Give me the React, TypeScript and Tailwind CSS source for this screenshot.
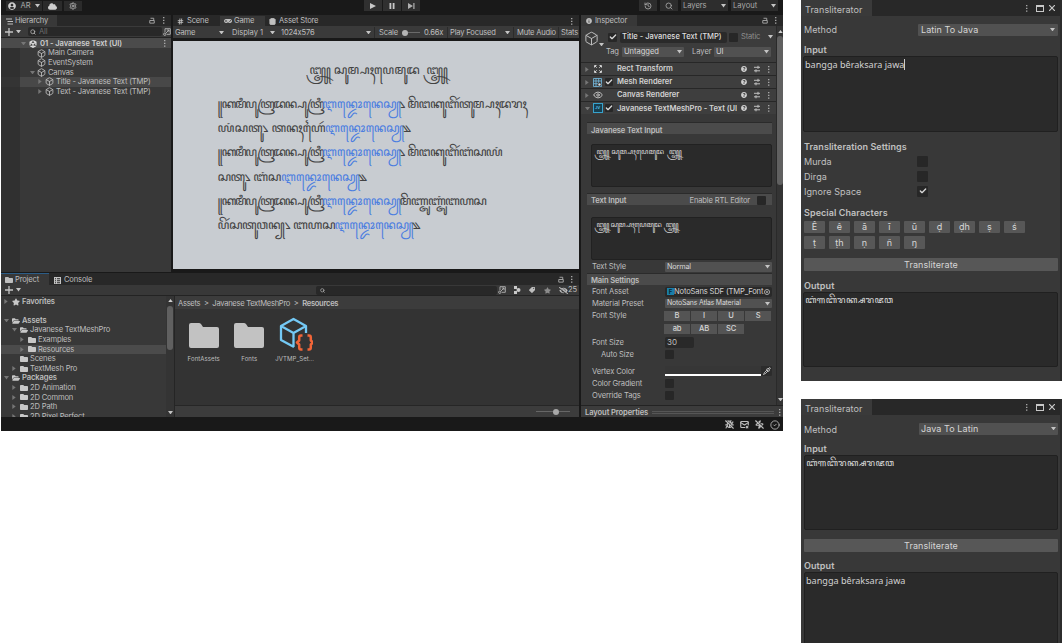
import React from "react";
import { Box, Search, History, Settings, Check, Eye, Pipette, CircleCheck, Hash, ShoppingBag, BugOff, MailX, ZapOff } from "lucide-react";
import { SiUnity } from "react-icons/si";
import { FaFolder, FaFolderOpen, FaStar, FaUserCircle, FaQuestionCircle, FaInfoCircle, FaTag, FaCloud, FaEyeSlash, FaGamepad } from "react-icons/fa";

const jv = "font-['Noto_Sans_Javanese','Noto_Sans',sans-serif]";

const Down = ({ c = "fill-[#c4c4c4]" }: { c?: string }) => (
  <svg viewBox="0 0 6 4" className={`h-[3.5px] w-[5px] shrink-0 ${c}`}><path d="M0 0h6L3 4z" /></svg>
);
const Right = () => (
  <svg viewBox="0 0 4 6" className="h-[5px] w-[4px] shrink-0 fill-[#767676]"><path d="M0 0v6l4-3z" /></svg>
);
const Dots = () => (
  <svg viewBox="0 0 2 8" className="h-[7px] w-[2px] shrink-0 fill-[#b8b8b8]"><path d="M0 0h1.4v1.4H0zM0 3.2h1.4v1.4H0zM0 6.4h1.4v1.4H0z" /></svg>
);
const LockIcon = () => (
  <svg viewBox="0 0 8 9" className="h-[7px] w-[6px] shrink-0" fill="none" stroke="#aaa" strokeWidth="1.2"><path d="M1 4.5h6v3.500H1zM2 1.500h4.300v3" /></svg>
);
const Plus = () => (
  <svg viewBox="0 0 8 8" className="h-[8px] w-[8px] shrink-0" stroke="#c4c4c4" strokeWidth="1.3"><path d="M4 0v8M0 4h8" /></svg>
);
const PickerIcon = () => (
  <svg viewBox="0 0 8 8" className="h-[8px] w-[8px] shrink-0" fill="none" stroke="#b4b4b4" strokeWidth=".9"><path d="M2 4V.7h5.300v5.600H4M2.800 5.200 6 2M3.800 2H6v2.200" /><circle cx="1.800" cy="6.200" r="1.200" /></svg>
);
const Presets = () => (
  <svg viewBox="0 0 8 8" className="h-[8px] w-[8px] shrink-0" stroke="#c0c0c0" strokeWidth="1"><path d="M1 2.300h6M1 5.800h6M5 .8v3M3 4.300v3" /></svg>
);
const Caret = ({ open }: { open?: boolean }) => (open ? <Down c="fill-[#767676]" /> : <Right />);

const Tick = ({ on, cls = "size-[9px]" }: { on?: boolean; cls?: string }) => (
  <span className={`flex shrink-0 items-center justify-center rounded-[1px] bg-[#272727] ${cls}`}>
    {on && <Check className="size-[8px] text-[#d8d8d8]" strokeWidth={4} />}
  </span>
);

const Drop = ({ label, cls }: { label: string; cls: string }) => (
  <div className={`flex items-center justify-between rounded-[1px] bg-[#515151] text-[#d6d6d6] ${cls}`}>
    <span>{label}</span>
    <Down />
  </div>
);

function TopBar() {
  return (
    <div className="flex h-[15px] items-start bg-[#191919] text-[#a8a8a8]">
      <div className="ml-[5px] mt-px flex h-[10px] w-[36px] items-center justify-between bg-[#2b2b2b] px-[2px]">
        <FaUserCircle className="size-[8px] text-[#d0d0d0]" />
        <span>AR</span>
        <Down />
      </div>
      <div className="ml-[1px] mt-px flex h-[10px] w-[19px] items-center justify-center bg-[#2b2b2b]"><FaCloud className="size-[9px] text-[#cfcfcf]" /></div>
      <div className="ml-[2px] mt-px flex h-[10px] w-[18px] items-center justify-center bg-[#2b2b2b]"><Settings className="size-[8px]" strokeWidth={3} /></div>
      <div className="ml-[282px] flex h-[11px] gap-px">
        <div className="flex w-[18px] items-center justify-center bg-[#303030]"><svg viewBox="0 0 6 6" className="size-[6px] fill-[#c8c8c8]"><path d="M0 0v6l6-3z" /></svg></div>
        <div className="flex w-[18px] items-center justify-center bg-[#303030]"><svg viewBox="0 0 6 6" className="size-[6px] fill-[#c8c8c8]"><path d="M.5 0h1.800v6H.5zM3.700 0h1.800v6H3.700z" /></svg></div>
        <div className="flex w-[18px] items-center justify-center bg-[#303030]"><svg viewBox="0 0 7 6" className="h-[6px] w-[7px] fill-[#b0b0b0]"><path d="M0 0v6l5-3zM5.300 0h1.200v6H5.300z" /></svg></div>
      </div>
      <div className="ml-[219px] flex h-[11px] w-[18px] items-center justify-center bg-[#2d2d2d]"><History className="size-[8px]" strokeWidth={2.5} /></div>
      <div className="ml-[3px] flex h-[11px] w-[18px] items-center justify-center bg-[#2d2d2d]"><Search className="size-[8px]" strokeWidth={2.5} /></div>
      <div className="ml-[3px] flex h-[11px] w-[47px] items-center justify-between bg-[#2d2d2d] px-[2px] pt-px tracking-[-.05px]"><span>Layers</span><Down /></div>
      <div className="ml-[3px] flex h-[11px] w-[47px] items-center justify-between bg-[#2d2d2d] px-[2px] pt-px tracking-[.05px]"><span>Layout</span><Down /></div>
    </div>
  );
}

function HNode({ label, pad, caret, sel }: { label: string; pad: string; caret?: "open" | "closed"; sel?: boolean }) {
  return (
    <div className="flex h-[9.6px]">
      <div className={`w-[19px] ${sel ? "bg-[#343434]" : "bg-[#303030]"}`} />
      <div className={`flex flex-1 items-center ${pad} ${sel ? "bg-[#484848]" : ""}`}>
        <span className="flex w-[7px] items-center">{caret && <Caret open={caret === "open"} />}</span>
        <Box className="size-[9px] text-[#c4c4c4]" strokeWidth={2.2} />
        <span className="ml-[2px]">{label}</span>
      </div>
    </div>
  );
}

function Hierarchy() {
  return (
    <div className="flex h-[257px] w-[170px] flex-col bg-[#383838]">
      <div className="flex h-[11px] items-center bg-[#282828]">
        <div className="flex h-full w-[56px] items-center gap-[2px] bg-[#383838] pl-[5px] pt-px">
          <svg viewBox="0 0 7 7" className="size-[7px]" stroke="#c0c0c0" strokeWidth="1"><path d="M0 1h6M1.500 3.500H7M1.500 6H7" /></svg>
          <span>Hierarchy</span>
        </div>
        <div className="ml-auto flex items-center gap-[8px] pr-[6px]"><LockIcon /><Dots /></div>
      </div>
      <div className="flex h-[12px] items-center border-b border-[#232323] bg-[#3a3a3a]">
        <div className="flex items-center gap-[3px] pl-[4px]"><Plus /><Down /></div>
        <div className="ml-[7px] flex h-[9px] w-[134px] items-center gap-[3px] rounded-[2px] bg-[#282828] pl-[2px] text-[#6c6c6c]">
          <Search className="size-[6px] text-[#bbb]" strokeWidth={3} /><span>All</span>
        </div>
        <div className="ml-[1px]"><PickerIcon /></div>
      </div>
      <div className="flex h-[10.400px] items-center bg-[#4b4b4b] pl-[20px] pr-[5px] pt-px font-semibold tracking-[-.08px]">
        <Down c="fill-[#767676]" />
        <SiUnity className="ml-[3px] size-[8px] text-[#e0e0e0]" />
        <span className="ml-[3px] flex-1 text-[#cecece]">01 - Javanese Text (UI)</span>
        <Dots />
      </div>
      <HNode label="Main Camera" pad="pl-[10px]" />
      <HNode label="EventSystem" pad="pl-[10px]" />
      <HNode label="Canvas" pad="pl-[10px]" caret="open" />
      <HNode label="Title - Javanese Text (TMP)" pad="pl-[18px]" caret="closed" sel />
      <HNode label="Text - Javanese Text (TMP)" pad="pl-[18px]" caret="closed" />
      <div className="w-[19px] flex-1 bg-[#303030]" />
    </div>
  );
}

const title = "꧃ ꦱꦸꦩ꧀ꦥꦃꦥꦺꦩꦸꦢ ꧃";
const indo = "ꦆꦤ꧀ꦢꦺꦴꦤꦺꦱꦾ";
const opening = "꧋ꦏꦩꦶꦥꦸꦠꦿꦢꦤ꧀ꦥꦸꦠꦿꦶ";
const verse: { a: string; wa: string; b: string; wb: string }[] = [
  { a: opening, wa: "w-[104.5px] tracking-[-1.5px]", b: "꧈ ꦩꦼꦔꦏꦸꦧꦼꦂꦠꦸꦩ꧀ꦥꦃꦢꦫꦃ", wb: "tracking-[-.6px]" },
  { a: "ꦪꦁꦱꦠꦸ꧈ ꦠꦤꦃꦲꦻꦂ", wa: "w-[107.5px]", b: "꧉", wb: "" },
  { a: opening, wa: "w-[104.5px] tracking-[-1.5px]", b: "꧈ ꦩꦼꦔꦏꦸꦧꦼꦂꦧꦁꦱꦪꦁ", wb: "tracking-[-.6px]" },
  { a: "ꦱꦠꦸ꧈ ꦧꦁꦱ", wa: "w-[63.5px] tracking-[-.3px]", b: "꧉", wb: "" },
  { a: opening, wa: "w-[104.5px] tracking-[-1.5px]", b: "ꦩꦼꦚ꧀ꦗꦸꦚ꧀ꦗꦸꦁꦧꦲꦱ", wb: "tracking-[-.6px]" },
  { a: "ꦥꦼꦂꦱꦠꦸꦮꦤ꧀꧈ ꦧꦲꦱ", wa: "w-[117px] tracking-[-.3px]", b: "꧉", wb: "" },
];

function GameView() {
  return (
    <div className="flex h-[257px] w-[406px] flex-col bg-[#191919]">
      <div className="flex h-[11px] items-center bg-[#282828] pt-px">
        <div className="flex w-[47px] items-center gap-[3px] pl-[4px]"><Hash className="size-[7px]" strokeWidth={3} />Scene</div>
        <div className="flex h-full w-[45px] items-center gap-[2px] bg-[#383838] pl-[4px]"><FaGamepad className="size-[8px]" />Game</div>
        <div className="flex items-center gap-[3px] pl-[4px]"><ShoppingBag className="size-[7px] fill-[#c0c0c0]" strokeWidth={3} />Asset Store</div>
        <div className="ml-auto pr-[6px]"><Dots /></div>
      </div>
      <div className="flex h-[12px] items-center bg-[#3a3a3a] pt-px">
        <div className="flex w-[51px] items-center justify-between pl-[2px]">Game<Down /></div>
        <div className="ml-[7px] flex w-[44px] items-center justify-between pl-[1px] tracking-[-.05px]"><span>Display 1</span><Down /></div>
        <div className="ml-[6px] flex h-full w-[94px] items-center justify-between border-r border-[#2b2b2b] pr-[3px]"><span>1024x576</span><Down /></div>
        <div className="flex h-full w-[73px] items-center border-r border-[#2b2b2b] pl-[4px]">
          Scale
          <span className="ml-[4px] size-[6px] rounded-full bg-[#b5b5b5]" /><span className="h-px w-[12px] bg-[#6a6a6a]" />
          <span className="ml-[4px]">0.66x</span>
        </div>
        <div className="flex h-full w-[66px] items-center justify-between border-r border-[#2b2b2b] pl-[2px] pr-[3px]"><span>Play Focused</span><Down /></div>
        <div className="flex h-full w-[45px] items-center border-r border-[#2b2b2b] pl-[3px] tracking-[-.22px]">Mute Audio</div>
        <div className="pl-[2px]">Stats</div>
      </div>
      <div className={`mt-[3px] mb-[3px] flex flex-1 flex-col bg-[#c8ccd1] tracking-normal text-[#424242] ${jv}`}>
        <div className="mt-[16px] flex h-[32px] items-center justify-center pl-[1px] text-[12.400px] whitespace-pre">{title}</div>
        <div className="ml-[44.5px] mt-[6px] text-[12.300px]">
          {verse.map((l, i) => (
            <div key={i} className="flex h-[24.2px] items-center whitespace-pre">
              <span className={`shrink-0 ${l.wa}`}>{l.a}</span><span className="w-[77.5px] shrink-0 text-[#4c7ee0]">{indo}</span><span className={l.wb}>{l.b}</span>
            </div>
          ))}
        </div>
      </div>
    </div>
  );
}

function TNode({ label, pad, caret, sel, open, bold, star }: { label: string; pad: string; caret?: "open" | "closed"; sel?: boolean; open?: boolean; bold?: boolean; star?: boolean }) {
  const Icon = star ? FaStar : open ? FaFolderOpen : FaFolder;
  return (
    <div className={`flex h-[9.6px] shrink-0 items-center ${pad} ${sel ? "bg-[#4b4b4b]" : ""} ${bold ? "font-semibold tracking-[-.1px]" : ""}`}>
      <span className="flex w-[8px] items-center">{caret && <Caret open={caret === "open"} />}</span>
      <Icon className="size-[8px] shrink-0 text-[#c8c8c8]" />
      <span className="ml-[2px]">{label}</span>
    </div>
  );
}

function Asset({ name, children }: { name: string; children: React.ReactNode }) {
  return (
    <div className="flex w-[45.500px] flex-col items-center">
      <div className="flex h-[40px] items-center">{children}</div>
      <span className="mt-px text-[6px] tracking-[.08px]">{name}</span>
    </div>
  );
}
const BigFolder = () => (
  <svg viewBox="0 0 30 25" className="h-[25px] w-[30px] fill-[#c2c2c2]"><path d="M0 2Q0 0 2 0h8q1 0 2 1l2 3h14q2 0 2 2v17q0 2-2 2H2q-2 0-2-2z" /></svg>
);

function Project() {
  return (
    <div className="flex h-[144px] w-[578px] flex-col bg-[#383838]">
      <div className="flex h-[12px] items-center bg-[#282828]">
        <div className="flex h-full w-[48px] items-center gap-[2px] border-t border-[#2c5d87] bg-[#383838] pl-[4px] pt-px"><FaFolder className="size-[8px]" />Project</div>
        <div className="flex items-center gap-[3px] pl-[5px] pt-[2px]">
          <svg viewBox="0 0 7 7" className="size-[7px] fill-[#c4c4c4]"><path d="M0 0h7v7H0zM1 1.200v1h1v-1zM3 1.200v1h3v-1zM1 3.200v1h1v-1zM3 3.200v1h3v-1zM1 5.200v1h1v-1zM3 5.200v1h3v-1z" fillRule="evenodd" /></svg>Console
        </div>
        <div className="ml-auto flex items-center gap-[7px] pr-[6px]"><LockIcon /><Dots /></div>
      </div>
      <div className="flex h-[11px] items-center border-b border-[#232323]">
        <div className="flex items-center gap-[3px] pl-[4px]"><Plus /><Down /></div>
        <div className="ml-[295px] flex h-[9px] w-[181px] items-center rounded-[2px] bg-[#282828] pl-[4px]"><Search className="size-[5px]" strokeWidth={3} /></div>
        <div className="ml-[1px] flex h-full items-center">
          <PickerIcon />
          <svg viewBox="0 0 8 8" className="ml-[7px] size-[8px] fill-[#c8c8c8]"><path d="M1 0h3v3H1zM1 5h3v3H1z" /><circle cx="5.500" cy="4" r="2" /></svg>
          <FaTag className="ml-[8px] size-[6px] -scale-x-100" />
          <FaStar className="ml-[9px] size-[7px] text-[#8c8c8c]" />
          <FaEyeSlash className="ml-[8px] size-[9px]" /><span>25</span>
        </div>
      </div>
      <div className="flex min-h-0 flex-1">
        <div className="flex w-[165px] flex-col overflow-hidden pt-[.8px]">
          <TNode label="Favorites" pad="pl-[3px]" caret="closed" bold star />
          <div className="h-[9.400px] shrink-0" />
          <TNode label="Assets" pad="pl-[3px]" caret="open" bold open />
          <TNode label="Javanese TextMeshPro" pad="pl-[11px]" caret="open" open />
          <TNode label="Examples" pad="pl-[19px]" caret="closed" />
          <TNode label="Resources" pad="pl-[19px]" caret="closed" sel />
          <TNode label="Scenes" pad="pl-[11px]" />
          <TNode label="TextMesh Pro" pad="pl-[11px]" caret="closed" />
          <TNode label="Packages" pad="pl-[3px]" caret="open" bold open />
          <TNode label="2D Animation" pad="pl-[11px]" caret="closed" />
          <TNode label="2D Common" pad="pl-[11px]" caret="closed" />
          <TNode label="2D Path" pad="pl-[11px]" caret="closed" />
          <TNode label="2D Pixel Perfect" pad="pl-[11px]" caret="closed" />
        </div>
        <div className="flex w-[9px] flex-col items-center border-r border-[#252525] bg-[#343434] py-[3px]">
          <svg viewBox="0 0 6 4" className="h-[3px] w-[5px] shrink-0 fill-[#d0d0d0]"><path d="M0 4h6L3 0z" /></svg>
          <div className="mt-[4px] h-[44px] w-[6px] rounded-[3px] bg-[#606060]" />
          <div className="mt-auto flex"><Down /></div>
        </div>
        <div className="flex flex-1 flex-col bg-[#333]">
          <div className="flex h-[13px] items-center bg-[#3c3c3c] pl-[3px] pt-[2px] tracking-[-.3px] whitespace-pre">Assets  &gt;  Javanese TextMeshPro  &gt;  <b className="font-semibold">Resources</b></div>
          <div className="flex pl-[6px] pt-[6px]">
            <Asset name="FontAssets"><BigFolder /></Asset>
            <Asset name="Fonts"><BigFolder /></Asset>
            <Asset name="JVTMP_Set...">
              <svg viewBox="0 0 36 36" className="h-[36px] w-[36px]" fill="none" strokeLinejoin="round">
                <path d="M17 30 4 23V9l12.500-7L29 9v7M4 9l12.500 7L29 9M16.500 16v14" stroke="#74c9f5" strokeWidth="2.300" />
                <path d="M25.500 18.500H24q-1.800 0-1.800 2v3L20 25.500l2.200 2v3q0 2 1.800 2h1.500M30.500 18.500H32q1.800 0 1.800 2v3l2.200 2-2.200 2v3q0 2-1.800 2h-1.500" stroke="#f26538" strokeWidth="2.500" />
              </svg>
            </Asset>
          </div>
          <div className="mt-auto flex h-[12px] items-center border-t border-[#262626] bg-[#3c3c3c] pl-[361px]">
            <span className="h-px w-[17px] bg-[#666]" /><span className="size-[6px] rounded-full bg-[#a8a8a8]" /><span className="h-px w-[11px] bg-[#666]" />
          </div>
        </div>
      </div>
    </div>
  );
}

function Comp({ icon, label, on, open }: { icon: React.ReactNode; label: string; on?: boolean; open?: boolean }) {
  return (
    <div className="flex h-[13.100px] items-center border-t border-[#272727] bg-[#3e3e3e] pl-[4px] pr-[6px] font-semibold tracking-[-.04px] text-[#d2d2d2]">
      <span className="flex w-[7px]"><Caret open={open} /></span>
      <span className="flex w-[11px] justify-center">{icon}</span>
      <span className="flex w-[14px] pl-[2px]">{on && <Tick on cls="size-[8px]" />}</span>
      <span className="w-[120px] overflow-hidden py-px whitespace-nowrap">{label}</span>
      <span className="ml-auto flex items-center"><FaQuestionCircle className="size-[6px]" /><span className="ml-[6px]"><Presets /></span><span className="ml-[7px]"><Dots /></span></span>
    </div>
  );
}

function Field({ label, h, children, indent }: { label: string; h: string; children?: React.ReactNode; indent?: boolean }) {
  return (
    <div className={`flex items-center ${h}`}>
      <span className={`w-[73px] shrink-0 tracking-[-.15px] ${indent ? "pl-[9px]" : ""}`}>{label}</span>
      {children}
    </div>
  );
}

const styleBtn = "flex h-[10px] w-[26px] items-center justify-center bg-[#545454] font-medium text-[#d4d4d4]";
const jvBox = "ml-[4px] h-[43px] rounded-[2px] border border-[#212121] bg-[#2a2a2a] pl-[2px] pt-[5px] text-[7.500px] whitespace-pre text-[#d0d0d0]";

function Inspector() {
  return (
    <div className="flex h-[402px] w-[202px] flex-col bg-[#383838]">
      <div className="flex h-[11px] items-center bg-[#282828]">
        <div className="flex h-full w-[56px] items-center gap-[3px] bg-[#383838] pl-[5px] pt-px"><FaInfoCircle className="size-[6px]" /><span>Inspector</span></div>
        <div className="ml-auto flex items-center gap-[7px] pr-[6px]"><LockIcon /><Dots /></div>
      </div>
      <div className="flex h-[379px]">
        <div className="flex w-[195px] flex-col">
          <div className="flex h-[36px] bg-[#3c3c3c]">
            <div className="mt-[4px] flex h-[16px] w-[23px] items-end pl-[3px]"><Box className="size-[15px] shrink-0" strokeWidth={1.600} /><Down /></div>
            <div className="flex-1">
              <div className="mt-[5px] flex h-[12px] items-center">
                <Tick on cls="ml-[4px] size-[9px]" />
                <span className="ml-[3px] flex h-[11px] w-[107px] items-center rounded-[2px] bg-[#2a2a2a] pl-[2px] font-medium tracking-[-.02px] text-[#dedede]">Title - Javanese Text (TMP)</span>
                <Tick cls="ml-[2px] size-[9px]" />
                <span className="ml-[3px] text-[#8c8c8c]">Static</span><span className="ml-[8px]"><Down /></span>
              </div>
              <div className="mt-[4px] flex h-[10px] items-center">
                <span className="ml-[2px] w-[16px]">Tag</span>
                <Drop label="Untagged" cls="h-[10px] w-[62px] px-[2px] tracking-[-.05px]" />
                <span className="ml-[8px] w-[22px] tracking-[-.05px]">Layer</span>
                <Drop label="UI" cls="h-[10px] w-[57px] px-[2px]" />
              </div>
            </div>
          </div>
          <Comp label="Rect Transform" icon={<svg viewBox="0 0 8 8" className="size-[8px]" fill="none" stroke="#d0d0d0" strokeWidth="1"><path d="M.5 2.500V.5h2M5.500.5h2v2M.5 5.500v2h2M7.500 5.500v2h-2" /><path d="M1 1l1.700 1.700M7 1 5.300 2.700M1 7l1.700-1.700M7 7 5.300 5.300" /></svg>} />
          <Comp on label="Mesh Renderer" icon={<svg viewBox="0 0 9 9" className="size-[9px]" fill="none" stroke="#76bfe6" strokeWidth=".8"><path d="M.5.5h8v8h-8zM3 .5v8M5.700.5v8M.5 3h8M.5 5.700h8" /><circle cx="6.500" cy="6.500" r="1.600" fill="#ddd" stroke="#333" /></svg>} />
          <Comp label="Canvas Renderer" icon={<Eye className="size-[10px]" strokeWidth={2} />} />
          <Comp on open label="Javanese TextMeshPro - Text (UI" icon={<span className="flex size-[10px] items-center justify-center border border-[#37a2cc] bg-[#173f50] text-[4px] text-[#5cc4ea]">JV</span>} />
          <div className="flex flex-1 flex-col pl-[6px] pr-[4px]">
            <div className="mt-[8px] flex h-[12px] items-center border-t border-[#2b2b2b] bg-[#4b4b4b] pl-[4px] pt-[3px] font-semibold tracking-[-.12px]">Javanese Text Input</div>
            <div className={`mt-[10px] tracking-[.2px] ${jvBox} ${jv}`}>{title}</div>
            <div className="mt-[6px] flex h-[12px] items-center border-t border-[#2b2b2b] bg-[#4b4b4b] pl-[4px] pt-[2px]">
              <span className="font-semibold tracking-[-.12px]">Text Input</span><span className="ml-auto mr-[7px]">Enable RTL Editor</span><Tick cls="mr-[6px] size-[9px]" />
            </div>
            <div className={`mt-[12px] tracking-[-.2px] ${jvBox} ${jv}`}>{title}</div>
            <div className="pl-[5px]"><Field label="Text Style" h="h-[13px]"><Drop label="Normal" cls="h-[10px] flex-1 px-[2px] text-[7.300px]" /></Field></div>
            <div className="flex h-[12px] items-center border-t border-[#2b2b2b] bg-[#4b4b4b] pl-[4px] pt-px font-semibold tracking-[-.15px]">Main Settings</div>
            <div className="pl-[5px]">
              <Field label="Font Asset" h="h-[13px]">
                <div className="flex h-[10px] flex-1 items-center overflow-hidden rounded-[2px] bg-[#292929] pl-[2px] whitespace-nowrap text-[#d4d4d4]"><span className="flex size-[7px] shrink-0 items-center justify-center bg-[#1a7ea8] text-[6px] font-bold text-[#0b2733]">F</span><span className="w-[90px] overflow-hidden py-px tracking-[-.16px]">NotoSans SDF (TMP_Font</span><span className="flex size-[6px] shrink-0 items-center justify-center rounded-full border border-[#aaa]"><span className="size-[2px] rounded-full bg-[#aaa]" /></span></div>
              </Field>
              <Field label="Material Preset" h="h-[11px]"><Drop label="NotoSans Atlas Material" cls="h-[9px] flex-1 px-[2px] text-[6.900px]" /></Field>
              <Field label="Font Style" h="h-[13px]"><div className="-ml-px flex gap-px"><span className={styleBtn}>B</span><span className={styleBtn}>I</span><span className={styleBtn}>U</span><span className={styleBtn}>S</span></div></Field>
              <Field label="" h="h-[13px]"><div className="-ml-px flex gap-px"><span className={styleBtn}>ab</span><span className={styleBtn}>AB</span><span className={styleBtn}>SC</span></div></Field>
              <Field label="Font Size" h="h-[14px]"><span className="flex h-[11px] w-[29px] items-center rounded-[2px] bg-[#292929] pl-[2px] text-[8px] tracking-normal">30</span></Field>
              <Field label="Auto Size" h="h-[10px]" indent><Tick /></Field>
              <div className="h-[6px]" />
              <Field label="Vertex Color" h="h-[12px]">
                <div className="flex h-[10px] flex-1 items-center rounded-[1px] bg-[#2c2c2c]"><div className="h-full w-[96px] border-b-2 border-white bg-[#363636]" /><Pipette className="ml-[2px] size-[8px]" strokeWidth={3} /></div>
              </Field>
              <Field label="Color Gradient" h="h-[12px]"><Tick /></Field>
              <Field label="Override Tags" h="h-[12px]"><Tick /></Field>
            </div>
          </div>
        </div>
        <div className="flex w-[7px] flex-col items-center border-l border-[#2a2a2a] bg-[#343434] pt-[4px]">
          <svg viewBox="0 0 6 4" className="h-[3px] w-[5px] shrink-0 fill-[#d0d0d0]"><path d="M0 4h6L3 0z" /></svg>
          <div className="mt-[3px] h-[149px] w-[6px] rounded-[3px] bg-[#606060]" />
          <div className="mb-[4px] mt-auto"><Down /></div>
        </div>
      </div>
      <div className="flex h-[12px] items-center border-t border-[#232323] bg-[#3c3c3c] pl-[4px] pr-[2px] pt-[2px] font-semibold tracking-[-.1px]">
        Layout Properties<span className="ml-[4px] mr-[5px] h-[3px] flex-1 border-y border-[#565656]" /><Dots />
      </div>
    </div>
  );
}

function Editor() {
  return (
    <div className="ml-px flex h-[431px] w-[782px] flex-col overflow-hidden bg-[#191919] text-[7.600px] leading-none tracking-[-.18px] whitespace-nowrap text-[#bebebe]">
      <TopBar />
      <div className="flex h-[402px] gap-[2px]">
        <div className="flex w-[578px] flex-col">
          <div className="flex gap-[2px]"><Hierarchy /><GameView /></div>
          <div className="mt-px"><Project /></div>
        </div>
        <Inspector />
      </div>
      <div className="flex flex-1 items-center justify-end gap-[6px] pr-[3px] pt-px">
        <BugOff className="size-[9px]" strokeWidth={3} /><MailX className="size-[9px]" strokeWidth={3} /><ZapOff className="size-[9px]" strokeWidth={3} /><CircleCheck className="size-[10px]" strokeWidth={2} />
      </div>
    </div>
  );
}

const chars1 = ["Ê", "ê", "ā", "ī", "ū", "ḍ", "ḍh", "ṣ", "ś"];
const chars2 = ["ṭ", "ṭh", "ṇ", "ñ", "ŋ"];
const Key = ({ c }: { c: string }) => (
  <span className="flex h-[12.500px] w-[21px] items-center justify-center rounded-[1px] bg-[#575757] text-[#d8d8d8]">{c}</span>
);
const Pad = ({ text, javanese, caret }: { text: string; javanese?: boolean; caret?: boolean }) => (
  <div className={`flex h-[75.500px] shrink-0 items-start rounded-[2px] border border-[#202020] bg-[#2a2a2a] text-[#d2d2d2] ${javanese ? `pl-[1px] pt-[5px] text-[9.500px] ${jv}` : "pl-[1px] pt-[1px] text-[9.100px] leading-[14px] tracking-[0] font-['Noto_Sans',sans-serif]"}`}>
    {text}{caret && <span className="mt-px h-[11px] w-px bg-[#ccc]" />}
  </div>
);
const WinHead = ({ h }: { h: string }) => (
  <div className={`flex shrink-0 items-center bg-[#282828] ${h}`}>
    <div className="flex h-full w-[71px] items-center bg-[#3a3a3a] pl-[4px] pt-[3px]">Transliterator</div>
    <div className="ml-auto flex items-center pr-[5px]">
      <Dots />
      <span className="ml-[8px] h-[7px] w-[8px] border border-t-2 border-[#c8c8c8]" />
      <svg viewBox="0 0 6 6" className="ml-[5px] size-[6px]" stroke="#c8c8c8" strokeWidth="1.200"><path d="M0 0l6 6M6 0L0 6" /></svg>
    </div>
  </div>
);
const Setting = ({ label, on }: { label: string; on?: boolean }) => (
  <div className="flex h-[15px] items-center"><span className="w-[114px] pl-px">{label}</span><Tick on={on} cls="size-[11px]" /></div>
);
const win = "flex w-[261px] flex-col overflow-hidden border-r-2 border-[#2c2c2c] bg-[#383838] text-[9px] leading-none tracking-[.08px] whitespace-nowrap text-[#c0c0c0]";
const aksara = "ꦧꦁꦒꦧꦼꦫꦏ꧀ꦱꦫꦗꦮ";

export default function App() {
  return (
    <div className="flex h-[643px] w-[1063px] overflow-hidden bg-white font-['Inter',sans-serif]">
      <Editor />
      <div className="ml-[18px] flex flex-col">
        <div className={`h-[381px] shrink-0 ${win}`}>
          <WinHead h="h-[16px]" />
          <div className="flex flex-1 flex-col px-[2px]">
            <div className="mt-[7px] flex h-[13px] items-center"><span className="w-[115px] pl-px">Method</span><Drop label="Latin To Java" cls="h-[12px] flex-1 px-[3px]" /></div>
            <div className="mt-[7px] flex h-[12px] items-center pl-px font-semibold">Input</div>
            <div className="h-px" />
            <Pad text="bangga bêraksara jawa" caret />
            <div className="mt-[8px] flex h-[14px] items-center pl-px font-semibold">Transliteration Settings</div>
            <Setting label="Murda" />
            <Setting label="Dirga" />
            <Setting label="Ignore Space" on />
            <div className="mt-[8px] flex h-[12px] items-center pl-px font-semibold">Special Characters</div>
            <div className="mt-[2px] flex gap-[4px] pl-px">{chars1.map((c) => <Key key={c} c={c} />)}</div>
            <div className="mt-[3px] flex gap-[4px] pl-px">{chars2.map((c) => <Key key={c} c={c} />)}</div>
            <div className="ml-px mt-[9px] flex h-[13px] shrink-0 items-center justify-center rounded-[1px] bg-[#575757] text-[#d6d6d6]">Transliterate</div>
            <div className="mt-[8px] flex h-[13px] items-center pl-px font-semibold">Output</div>
            <Pad text={aksara} javanese />
          </div>
        </div>
        <div className={`mt-[18px] h-[244px] shrink-0 ${win}`}>
          <WinHead h="h-[16px]" />
          <div className="flex flex-1 flex-col pl-[3px] pr-[2px]">
            <div className="mt-[6px] flex h-[15px] shrink-0 items-center pb-px"><span className="w-[115px] pt-[3px]">Method</span><Drop label="Java To Latin" cls="mt-px h-[12px] flex-1 px-[2px]" /></div>
            <div className="mt-[6px] flex h-[12px] shrink-0 items-center pt-px font-semibold">Input</div>
            <div className="h-px shrink-0" />
            <div className="mt-[-1.500px] shrink-0 pt-[1px]"><Pad text={aksara} javanese /></div>
            <div className="mt-[8.500px] flex h-[13px] shrink-0 items-center justify-center rounded-[1px] bg-[#575757] text-[#d6d6d6]">Transliterate</div>
            <div className="mt-[7px] flex h-[13px] shrink-0 items-center pt-px font-semibold">Output</div>
            <div className="h-[.5px] shrink-0" />
            <Pad text="bangga bêraksara jawa" />
          </div>
        </div>
      </div>
    </div>
  );
}
